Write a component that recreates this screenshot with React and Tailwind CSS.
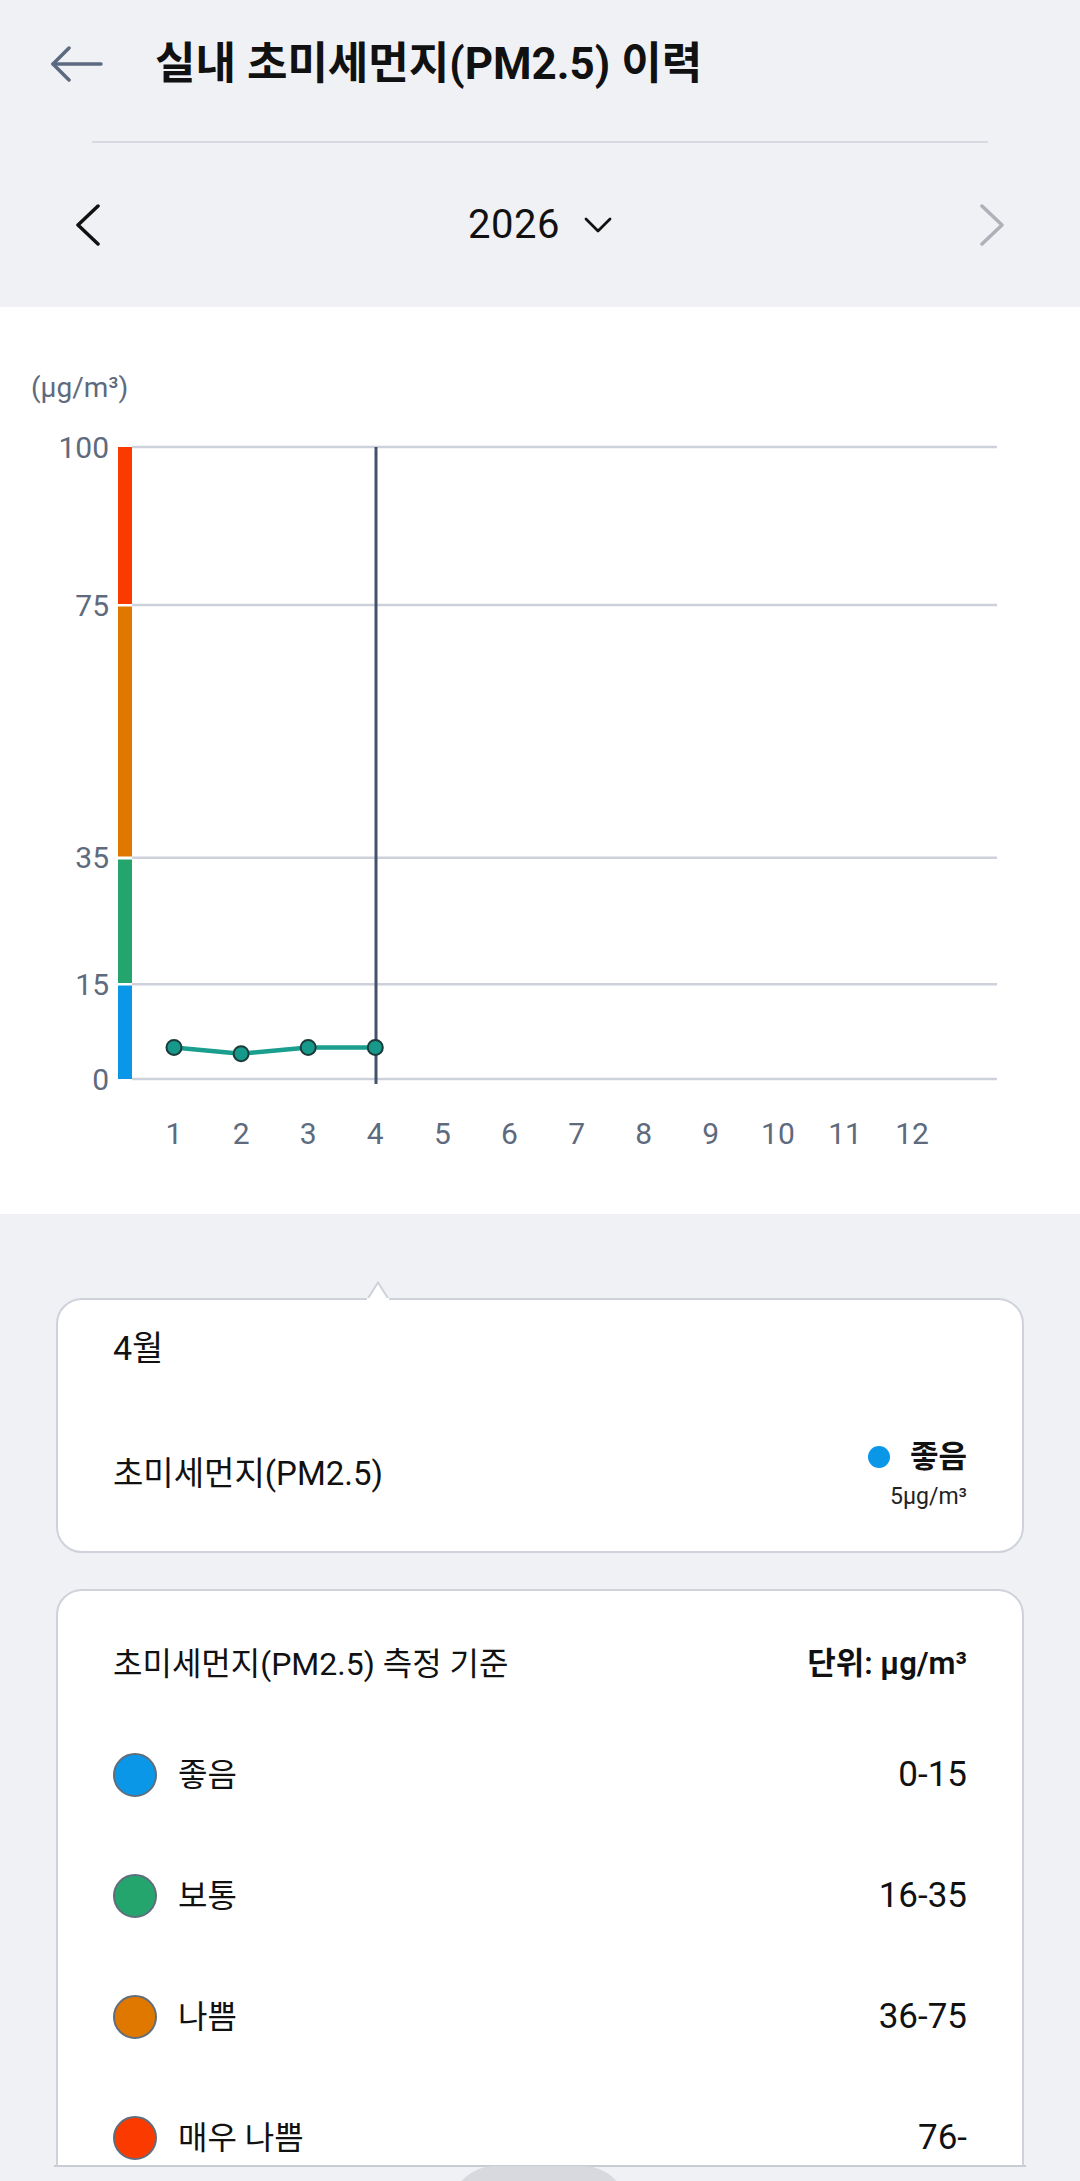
import React from "react";

const months = [1, 2, 3, 4, 5, 6, 7, 8, 9, 10, 11, 12];
const data = [5, 4, 5, 5];
const xOf = (i) => 174 + i * 67.1;
const yOf = (v) => 772 - v * 6.32;

function Chart() {
  const grid = [100, 75, 35, 15, 0];
  const pts = data.map((v, i) => [xOf(i), yOf(v)]);
  return (
    <svg width="1080" height="907" viewBox="0 0 1080 907" className="block">
      <text x="31" y="80" fontSize="28" fill="#5e6a7d" fontFamily="Roboto, sans-serif" dominantBaseline="central">
        (μg/m³)
      </text>
      {grid.map((g) => (
        <g key={g}>
          <line x1="132" x2="997" y1={yOf(g)} y2={yOf(g)} stroke="#cdd1db" strokeWidth="2.5" />
          <text
            x="109"
            y={yOf(g)}
            fontSize="30"
            fill="#5e6a7d"
            textAnchor="end"
            dominantBaseline="central"
            fontFamily="Roboto, sans-serif"
          >
            {g}
          </text>
        </g>
      ))}
      <rect x="118" y="140" width="14" height="157" fill="#fb3a00" />
      <rect x="118" y="299.5" width="14" height="250" fill="#e07800" />
      <rect x="118" y="552.5" width="14" height="123.5" fill="#25a56e" />
      <rect x="118" y="678.5" width="14" height="93.5" fill="#0a97e8" />
      <line x1="376" x2="376" y1="140" y2="777" stroke="#45526b" strokeWidth="3" />
      <polyline
        points={pts.map((p) => p.join(",")).join(" ")}
        fill="none"
        stroke="#1a9e8e"
        strokeWidth="4.5"
        strokeLinejoin="round"
      />
      {pts.map((p, i) => (
        <circle key={i} cx={p[0]} cy={p[1]} r="7.5" fill="#16998a" stroke="#1d3a3a" strokeWidth="2" />
      ))}
      {months.map((m, i) => (
        <text
          key={m}
          x={xOf(i)}
          y="826"
          fontSize="30"
          fill="#5e6a7d"
          textAnchor="middle"
          dominantBaseline="central"
          fontFamily="Roboto, sans-serif"
        >
          {m}
        </text>
      ))}
    </svg>
  );
}

const levels = [
  { name: "좋음", range: "0-15", color: "bg-[#0a97e8]" },
  { name: "보통", range: "16-35", color: "bg-[#25a56e]" },
  { name: "나쁨", range: "36-75", color: "bg-[#e07800]" },
  { name: "매우 나쁨", range: "76-", color: "bg-[#fb3a00]" },
];

export default function App() {
  return (
    <div className="relative w-[1080px] h-[2181px] overflow-hidden bg-[#f0f1f5] text-[#111111] font-[Roboto,'Noto_Sans_CJK_KR',sans-serif]">
      <div className="h-[2165px] overflow-hidden">
        {/* header */}
        <div className="h-[128px] flex items-center">
          <div className="w-[155px] pl-[51px] flex items-center">
            <svg width="52" height="36" viewBox="0 0 52 36" fill="none">
              <path d="M2 18 H50" stroke="#5c6a80" strokeWidth="3.5" strokeLinecap="round" />
              <path d="M18 2 L2 18 L18 34" stroke="#5c6a80" strokeWidth="3.5" strokeLinecap="round" strokeLinejoin="round" />
            </svg>
          </div>
          <h1 className="text-[44px] leading-[56px] font-bold text-[#111111]">실내 초미세먼지(PM2.5) 이력</h1>
        </div>
        <div className="mx-[92px] mt-[13px] h-[2px] bg-[#d6d9df]" />
        <div className="h-[164px] flex items-center justify-between px-[74px]">
          <svg width="28" height="42" viewBox="0 0 28 42" fill="none">
            <path d="M24 2 L4 21 L24 40" stroke="#111111" strokeWidth="3.5" strokeLinecap="round" strokeLinejoin="round" />
          </svg>
          <div className="flex items-center gap-[24px]">
            <span className="text-[40px] leading-[48px] text-[#111111] tracking-[0.5px]">2026</span>
            <svg width="28" height="16" viewBox="0 0 28 16" fill="none">
              <path d="M2 2 L14 14 L26 2" stroke="#111111" strokeWidth="2.8" strokeLinecap="round" strokeLinejoin="round" />
            </svg>
          </div>
          <svg width="28" height="42" viewBox="0 0 28 42" fill="none">
            <path d="M4 2 L24 21 L4 40" stroke="#aeb1b8" strokeWidth="3.5" strokeLinecap="round" strokeLinejoin="round" />
          </svg>
        </div>

        {/* chart */}
        <div className="bg-white h-[907px]">
          <Chart />
        </div>

        {/* cards */}
        <div className="px-[56px] pt-[84px]">
          <div className="relative h-[255px] bg-white border-2 border-[#cfd2da] rounded-[26px] px-[55px]">
            <svg className="absolute left-[309px] top-[-19px]" width="22" height="21" viewBox="0 0 22 21">
              <path d="M0 21 L11 2 L22 21 Z" fill="#ffffff" />
              <path d="M0 19 L11 1.5 L22 19" fill="none" stroke="#cfd2da" strokeWidth="2" />
              <rect x="0" y="17" width="22" height="4" fill="#ffffff" />
            </svg>
            <div className="pt-[27px] text-[34px] leading-[42px]">4월</div>
            <div className="mt-[68px] flex items-center justify-between">
              <div className="text-[33px] leading-[44px]">초미세먼지(PM2.5)</div>
              <div className="flex flex-col items-end">
                <div className="flex items-center gap-[20px] h-[40px]">
                  <span className="w-[22px] h-[22px] rounded-full bg-[#0a97e8]" />
                  <span className="text-[31px] leading-[40px] font-bold">좋음</span>
                </div>
                <div className="mt-[6px] text-[23px] leading-[28px] text-[#222222]">5μg/m³</div>
              </div>
            </div>
          </div>

          <div className="mt-[36px] bg-white border-2 border-[#cfd2da] rounded-[26px] px-[55px] h-[700px]">
            <div className="pt-[51px] h-[95px] flex items-center justify-between">
              <span className="text-[32px] leading-[44px]">초미세먼지(PM2.5) 측정 기준</span>
              <span className="text-[31px] leading-[44px] font-semibold">단위: μg/m³</span>
            </div>
            <div className="mt-[28px] flex flex-col">
              {levels.map((l) => (
                <div key={l.name} className="h-[121px] flex items-center justify-between">
                  <div className="flex items-center gap-[21px]">
                    <span className={`w-[44px] h-[44px] rounded-full border-2 border-[#5f6d7c] ${l.color}`} />
                    <span className="text-[32px] leading-[44px]">{l.name}</span>
                  </div>
                  <span className="text-[35px] leading-[44px]">{l.range}</span>
                </div>
              ))}
            </div>
          </div>
        </div>
      </div>
      <div className="relative h-[16px] overflow-hidden">
        <div className="absolute left-[54px] right-[54px] top-0 h-[2px] bg-[#c9ccd3]" />
        <div className="absolute left-[450px] top-[1px] w-[178px] h-[90px] rounded-[64px] bg-[#d8d9de]" />
      </div>
    </div>
  );
}
